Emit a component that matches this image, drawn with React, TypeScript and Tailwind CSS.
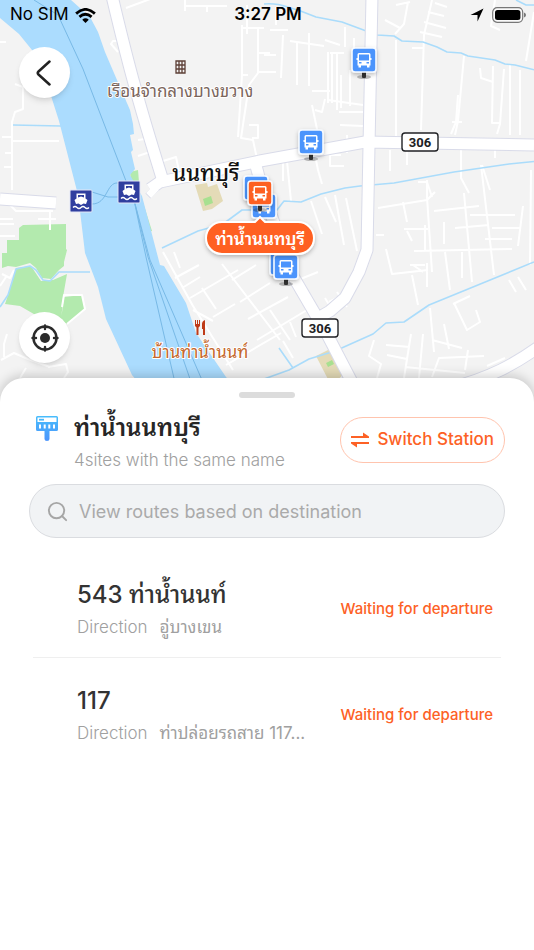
import { Search } from 'lucide-react'

const pins = [
  { x: 364, y: 60, post: true },
  { x: 311, y: 142, post: true },
  { x: 256, y: 188, post: false },
  { x: 264, y: 206, post: false },
  { x: 282, y: 263, post: false },
  { x: 286, y: 267, post: true },
]

const routes = [
  { name: '543 ท่าน้ำนนท์', direction: 'อู่บางเขน', status: 'Waiting for departure' },
  { name: '117', direction: 'ท่าปล่อยรถสาย 117...', status: 'Waiting for departure' },
]

const smallRoads = [
  // west bank
  'M0 42h6M15 84l8 3v22l-8 3-3 10v68M2 137h9M13 141h46M5 153h7M4 167h8',
  'M0 219h13M0 236h15M10 195v10l6 6h37M0 224h14M50 212v18M38 219h18',
  'M2 274l8 4 4-8M0 286l6-9M4 357v-13l3-10M1 360l13-7 14 6 22 8M48 367l18-3 2 8-4 6M20 378l6-10M62 307l2-12h18l3 14-18 15',
  // north centre
  'M126 8l27-10M185 0v11M184 6h43M207 6v6M118 52l-7-8 2-3h5M138 140l7-1M138 156l12-4',
  'M242 25v50l-4 62M242 28h22M247 5v29M242 75h6M258 28v45l-9 12-8 53 12 2 4 19M249 125h9v13h-6M259 53h11M259 72h12M163 161l13-4 3 14',
  'M270 30h18M276 7v18M264 55h12M264 72h12M290 41l34 5M283 35l-2 43M297 43v42M309 33v53M328 52v51M345 27v20M354 38v12M325 40l15 5',
  'M332 53v50M337 53v57M341 75v33M330 53h14M350 70v36M312 91h18M325 99l-3 13-7-2M328 100l35 5M339 112h24M312 105l6 29M340 125l23 1M347 135v18M283 161v20M287 161l4 40M314 150l4 20 4 14M329 155h12M330 146v20h14',
  // north east
  'M396 40v98M432 0l-8 35-3 95M412 48h11M428 12l16 4M424 22l22 6M420 32l22 5M408 2l-4 22-9 10M396 5l14-3M385 20l15 8M435 3l12 4',
  'M464 56l-6 65-3 14M458 95l-2 27-5 12M452 122h10M480 68l1 10 12 4M493 66l-1 57h9M504 69l-4 55-3 10M510 65v70M520 70v65M495 0l-4 26 9 4M534 12l-8 49',
  'M390 150v21M407 147v18M461 150v28l8 15M482 165l8 25M495 150v8M418 182h9l5 15',
  // east
  'M378 208l49-8 8-8M403 202l4 20M427 180v17l5 75M434 211l45-5M444 222v22M464 193l8 89M404 229h24M407 231l5 10M414 251l98-2M425 225v26M462 252v26M481 165l13 110M492 228h28M485 239h27M455 228l34-3M531 170l-1 95M445 252l5 38M523 206l-5 40M470 215h45',
  'M386 249l6 25 36-4M413 265l10 7M412 275l6 30M427 263v24M410 265h15M509 280l7 12M518 277l8 13M376 235h8M453 304l17-8M454 303l13 27 13-8-4-12M430 308l4 44M444 324l5 25M432 340l30 8',
  'M374 340l-5 16 12 8-4 14M386 345l24 2M387 355l20 4M411 334l-7 44M423 334l-4 44M405 367l60 6M432 377l7-19 45-2M468 350l-3 20M487 366l18-8',
  // below the station
  'M163 252l30 54 40 64M182 288l18-11M174 252l6 16M175 278l24-13M190 298l48-28M202 288l14 21M213 317l22-13M222 264l58 76M193 310l20 11M232 280l24-15M240 302l30-19M248 319l40-22M257 340l50-30M270 310l20 30M226 365l55-32M283 341l10 17M290 322l6 15',
  'M311 201l11 33M325 197l11 25M335 195l9 50M346 198l11 53M298 156l14 4M298 280l20-8M325 298l9 15M337 292l10 15M329 302l18-9',
]

const canals = [
  'M264 4c14-1 20 2 34 6l18 7 26 5 35 13 17 1 8 5 21 1 14 5 10 5 14 1 7 3 27 4 10 4 10 1 20 5',
  'M13 125l48 1',
  'M162 248l36-17 25-7 19-14 35 0 7-9 17 1 20-8 24-6 15-2 34-3 60-11 55-8 30-3h35',
  'M0 307l8-12 8-26 14-3 6 4 7 10 7 1 9-9h31',
  'M264 379l25-9 20-11 26-8 38-17 13-11 18-1 25-17 105-43',
  'M279 348l14 20M516 0l10 5h10',
]

const mainRoads = [
  'M112 -4C126 55 136 95 163 181',
  'M0 199l56 4',
  'M150 189l10-7 100-21 105-19 169 3',
  'M150 189l5 5M255 162l8 30 30 84 35 60 26 50',
  'M372 -4l-3 150-2 104-8 22-14 26-15 13-12 7',
  'M450 388c40-10 65-24 90-42',
]

function Bus({ x, y, color, post }: { x: number; y: number; color: string; post: boolean }) {
  return (
    <g transform={`translate(${x} ${y})`}>
      {post && (
        <>
          <ellipse cx="0" cy="17" rx="7" ry="2" fill="#000" opacity=".25" />
          <rect x="-2" y="11" width="4" height="7" rx="1" fill="#333" />
        </>
      )}
      <rect x="-12" y="-12" width="24" height="24" rx="3" fill={color} stroke="#f6faff" strokeWidth="1.6" filter="url(#shadow)" />
      <path
        fill="#fff"
        fillRule="evenodd"
        d="M-5-7h10q1.500 0 1.500 1.500V-2H7.500V0H6.500V5.500H5.500v2H3v-2h-6v2h-2.500v-2H-6.500V0H-7.500V-2h1v-3.500Q-6.500-7-5-7ZM-5-5.500V.5H5V-5.500ZM-5 2v1.500h2.500V2ZM2.500 2v1.500H5V2Z"
      />
    </g>
  )
}

function Ferry({ x, y }: { x: number; y: number }) {
  return (
    <g transform={`translate(${x} ${y})`}>
      <rect x="-11" y="-11" width="22" height="22" rx="1" fill="#303f9f" stroke="#e3e6f6" />
      <path
        fill="#fff"
        fillRule="evenodd"
        d="M-4.500-7.500h9v5L6.500-1 5 3 2.500 2.500 0 4-2.500 2.500-5 3-6.500-1l2-1.500ZM-3-6v2.500L0-4.500 3-3.500V-6Z"
      />
      <path d="M-8 6.500q2-2 4 0t4 0t4 0t4 0" fill="none" stroke="#fff" strokeWidth="1.3" />
    </g>
  )
}

function Shield({ x, y }: { x: number; y: number }) {
  return (
    <g transform={`translate(${x} ${y})`}>
      <rect x="-18" y="-9" width="36" height="18" rx="3" fill="#fff" stroke="#202124" strokeWidth="1.4" />
      <text y="5" textAnchor="middle" fontSize="13" fontWeight="700" fill="#202124" className="font-['Roboto',sans-serif]">306</text>
    </g>
  )
}

function StationMap() {
  return (
    <svg viewBox="0 0 534 402" preserveAspectRatio="xMidYMin slice" className="block h-full w-full" role="img" aria-label="ท่าน้ำนนทบุรี">
      <defs>
        <filter id="shadow" x="-40%" y="-40%" width="180%" height="180%">
          <feDropShadow dx="0" dy="2" stdDeviation="2" floodOpacity=".25" />
        </filter>
      </defs>
      <rect width="534" height="402" fill="#f3f3f3" />
      <path fill="#b3eaae" d="M23 225l43-1v25l1 1-3 12 0 4-5 4-8 9-9-1-6-10-6-5-14 4-8-1-6 2v-15h5v-13h12v-12ZM16 268l15-2 10 15 12-1 14-6-4 23-2 26-22-6-19-11-15-2 5-15ZM64 297l18-2 3 14-18 15-6-4ZM130 172l8-2 1 12-8 1ZM140 193l12 38-5 1-9-25Z" />
      <path fill="#abdcfe" d="M0 0h71l19 17 8 15 7 20 12 28 13 30 3 14 1 10-4 1 3 15-2 2 4 17-5 6 12 21 18 69 4 1 22 37 10 30 30 44 20 22h-94l-20-24-26-56-8-32-13-34-5-42-3-20-18-70-13-41L32 50 19 34 0 18Z" />
      <path d="M34 0l24 15 25 54 43 112M134 200l12 57 30 130M134 200l14 57 42 122 5 8M134 200l16 60 55 127M92 192l16 5h10M92 204c16 0 14-22 26-21" fill="none" stroke="#78b9e6" strokeWidth="1" />
      <path fill="#e4dbb7" d="M195 185l12-2 1 4 9-3 6 17-11 8-9 2ZM316 356l14-7 14 24-12 14Z" />
      <path fill="#a8e090" d="M203 199l8-3 2 7-8 3ZM326 363l6-3 2 4-6 3Z" />
      <g fill="none" stroke="#fff" strokeWidth="2" strokeLinejoin="round">
        {smallRoads.map(d => <path key={d} d={d} />)}
      </g>
      <g fill="none" stroke="#aadcfb" strokeWidth="1.6" strokeLinejoin="round">
        {canals.map(d => <path key={d} d={d} />)}
      </g>
      <g fill="none" stroke="#d9dbe9" strokeWidth="13" strokeLinejoin="round">
        {mainRoads.map(d => <path key={d} d={d} />)}
      </g>
      <g fill="none" stroke="#fff" strokeWidth="11" strokeLinejoin="round">
        {mainRoads.map(d => <path key={d} d={d} />)}
      </g>

      <path d="M176 61h9v12h-9ZM179 61v12M182 61v12M176 65h9M176 69h9" fill="#f3f3f3" stroke="#5d4037" strokeWidth="1.3" />
      <g stroke="#fff" strokeWidth="2" paintOrder="stroke" strokeLinejoin="round" textAnchor="middle">
        <text x="180" y="97" fontSize="17" fill="#7b655c">เรือนจำกลางบางขวาง</text>
        <text x="206" y="181" fontSize="22" fontWeight="500" fill="#111">นนทบุรี</text>
        <text x="200" y="358" fontSize="17" fill="#c5672a">บ้านท่าน้ำนนท์</text>
      </g>
      <path fill="#bf3b18" d="M195 320h1v4h1v-4h1v4h1v-4h1v6l-1.500 1.500V335h-2v-7.500L195 326ZM205 320v15h-2v-6h-1v-5q0-3 3-4Z" />
      <Ferry x={81} y={201} />
      <Ferry x={129} y={192} />
      <Shield x={420} y={142} />
      <Shield x={320} y={328} />

      {pins.map(pin => <Bus key={`${pin.x}-${pin.y}`} color="#4c94fc" {...pin} />)}
      <Bus x={260} y={193} color="#fd6023" post />
      <g filter="url(#shadow)">
        <path d="M222 222h33l5-5 5 5h33a16 16 0 0 1 0 32h-76a16 16 0 0 1 0-32Z" fill="#ff6120" stroke="#fff" strokeWidth="2" />
      </g>
      <text x="260" y="245" textAnchor="middle" fontSize="17" fontWeight="600" fill="#fff">ท่าน้ำนนทบุรี</text>
    </svg>
  )
}

function StatusBar() {
  return (
    <div className="absolute inset-x-0 top-0 grid h-[30px] grid-cols-3 items-center pl-2.5 pr-2 text-[17px] text-black">
      <div className="flex items-center gap-1.5">
        <span>No SIM</span>
        <svg viewBox="0 0 22 16" className="h-[15px] w-[21px]" fill="none" stroke="#000" strokeWidth="3">
          <path d="M1 6Q11-3 21 6M4.500 9.500Q11 4 17.500 9.500" />
          <path d="M7.500 12.500Q11 9.500 14.500 12.500L11 16Z" fill="#000" stroke="none" />
        </svg>
      </div>
      <span className="text-center font-semibold">3:27 PM</span>
      <div className="flex items-center justify-end gap-2">
        <svg viewBox="0 0 14 14" className="size-3.5">
          <path d="M13.500.5L7.500 13.500V7H.5Z" fill="#000" />
        </svg>
        <svg viewBox="0 0 34 16" className="h-4 w-[34px]">
          <rect x=".7" y=".7" width="30" height="14.600" rx="4.500" fill="#fff" fillOpacity=".5" stroke="#777" strokeWidth="1.200" />
          <rect x="3" y="3" width="25.400" height="10" rx="2.500" />
          <path d="M32 5.500q2 .8 2 2.500t-2 2.500Z" fill="#777" />
        </svg>
      </div>
    </div>
  )
}

function StationSign() {
  return (
    <svg viewBox="0 0 22 25" className="h-[25px] w-[22px]">
      <defs>
        <linearGradient id="sign" x1="0" y1="0" x2="0" y2="25" gradientUnits="userSpaceOnUse">
          <stop stopColor="#48bdfc" />
          <stop offset="1" stopColor="#4c94fc" />
        </linearGradient>
      </defs>
      <path d="M1.500 0h19Q22 0 22 1.500v12q0 1.500-1.500 1.500h-7v8q0 2-2.500 2t-2.500-2v-8h-7Q0 15 0 13.500v-12Q0 0 1.500 0Z" fill="url(#sign)" />
      <rect x="1.500" y="1.500" width="19" height="4.500" fill="#fff" />
      <path d="M3 3.700h5" stroke="#4ab8fb" strokeWidth="1.800" />
      <path d="M4 8.500v4M8.700 8.500v4M13.300 8.500v4M18 8.500v4" stroke="#fff" strokeWidth="2" />
    </svg>
  )
}

export default function App() {
  return (
    <div className="flex min-h-screen flex-col bg-white font-['Inter','Noto_Sans_Thai_Looped','Loma','Waree','Noto_Sans_Thai',sans-serif]">
      <header className="relative h-[402px] overflow-hidden">
        <StationMap />
        <StatusBar />
        <button aria-label="Back" className="absolute left-[19px] top-[47px] flex size-[51px] items-center justify-center rounded-full bg-white shadow-md">
          <svg viewBox="0 0 18 28" className="h-7 w-[18px]" fill="none" stroke="#222" strokeWidth="2.500" strokeLinecap="round" strokeLinejoin="round">
            <path d="M13.500 2.500L2.500 12.500Q1 14 2.500 15.500L13.500 25.500" />
          </svg>
        </button>
        <button aria-label="My location" className="absolute left-[19px] top-[312px] flex size-[51px] items-center justify-center rounded-full bg-white shadow-md">
          <svg viewBox="0 0 28 28" className="size-7" fill="none" stroke="#2b2b2b" strokeWidth="2.400" strokeLinecap="round">
            <circle cx="14" cy="14" r="11.500" />
            <circle cx="14" cy="14" r="5" fill="#2b2b2b" stroke="none" />
            <path d="M14 1.500v3.500M14 23v3.500M1.500 14H5M23 14h3.500" />
          </svg>
        </button>
      </header>

      <main className="relative -mt-6 flex-1 rounded-t-3xl bg-white pt-3.5 shadow-[0_-2px_12px_rgba(0,0,0,0.2)]">
        <div className="mx-auto h-1.5 w-14 rounded-full bg-[#dcdcdc]" />

        <section className="flex items-start justify-between pl-9 pr-[29px] pt-[14px]">
          <div className="flex gap-4">
            <div className="pt-1">
              <StationSign />
            </div>
            <div>
              <h1 className="text-2xl font-semibold leading-8 text-[#262626]">ท่าน้ำนนทบุรี</h1>
              <p className="mt-1 text-[17px] font-light leading-6 text-[#a0a0a0]">4sites with the same name</p>
            </div>
          </div>
          <button className="mt-[5px] flex h-[46px] items-center gap-2 rounded-full border border-[#ffc4ae] px-2.5 text-[17px] font-medium text-[#fd6125]">
            <svg viewBox="0 0 18 16" className="h-4 w-[18px]" fill="currentColor">
              <path d="M0 4h12V.5L18 4.500V6H0ZM18 10H0v1.500l6 4V12h12Z" />
            </svg>
            Switch Station
          </button>
        </section>

        <label className="mx-[29px] mt-3 flex h-[54px] items-center gap-2.5 rounded-full border border-[#dadce0] bg-[#f1f3f5] px-4">
          <Search className="size-[23px] shrink-0 text-[#a6a6a6]" strokeWidth={2} />
          <input
            type="search"
            aria-label="View routes based on destination"
            placeholder="View routes based on destination"
            className="min-w-0 flex-1 bg-transparent text-[18px] outline-none placeholder:text-[#aaaaaa]"
          />
        </label>

        <ul className="mx-[33px] mt-3.5 divide-y divide-[#efefef]">
          {routes.map(route => (
            <li key={route.name} className="flex items-center justify-between pb-[18px] pl-11 pr-2 pt-[27px]">
              <div>
                <h2 className="text-2xl font-medium leading-8 text-[#333]">{route.name}</h2>
                <p className="mt-1 flex gap-3 text-[17px] leading-6 text-[#a0a0a0]">
                  <span className="font-light">Direction</span>
                  <span>{route.direction}</span>
                </p>
              </div>
              <span className="text-[15px] font-medium text-[#fd6125]">{route.status}</span>
            </li>
          ))}
        </ul>
      </main>
    </div>
  )
}
